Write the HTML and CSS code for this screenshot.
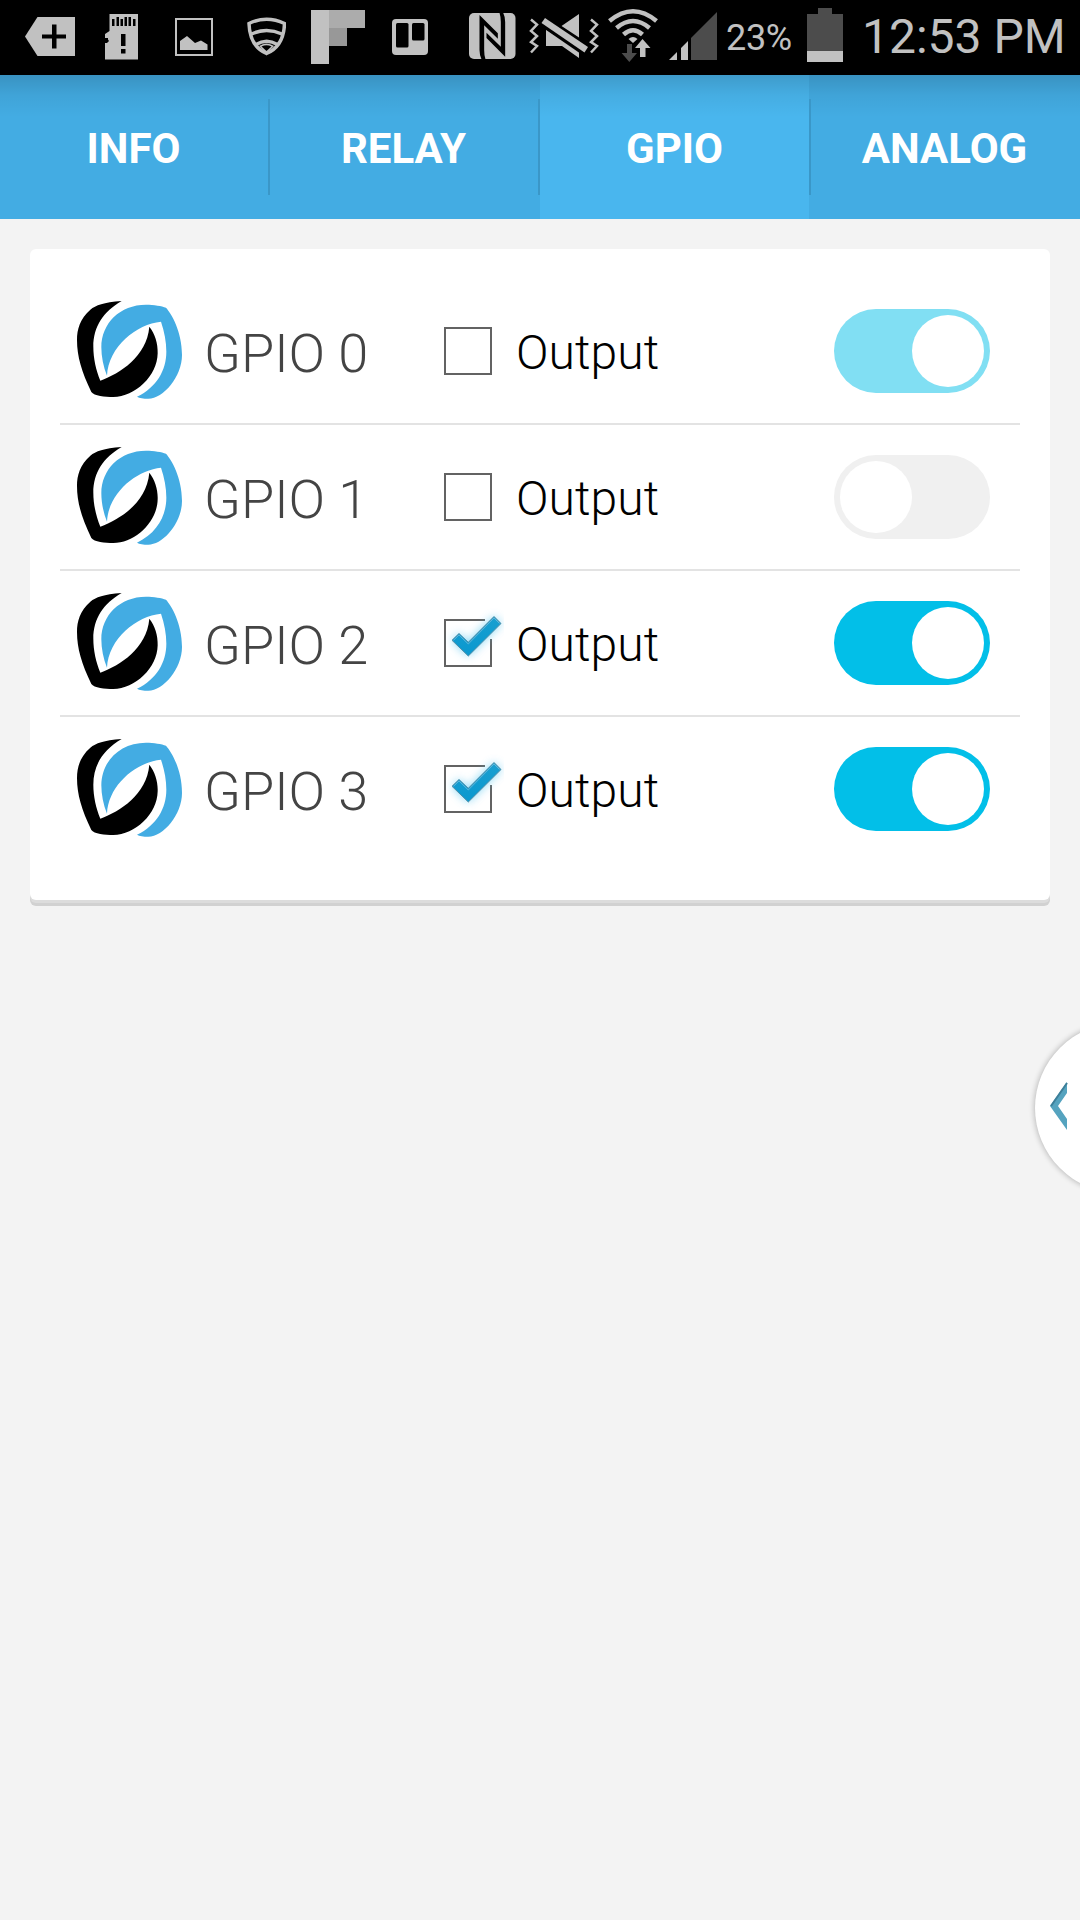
FILE: index.html
```html
<!DOCTYPE html>
<html lang="en">
<head>
<meta charset="utf-8">
<title>GPIO</title>
<link rel="stylesheet" href="styles.css">
</head>
<body>
<svg class="defs" aria-hidden="true">
  <symbol id="logo" viewBox="171 183 315 294">
    <path d="M305 183C250 187 228 196 211 209C180 236 171 268 171 300C171 350 185 395 214 456C222 468 255 471 280 471C345 471 412 408 413 340C414 310 405 282 388 260C380 350 300 400 241 422C228 390 220 355 220 320C220 260 250 215 305 183Z" fill="#000"/>
    <path d="M261 407C250 380 244 350 244 322C244 250 300 194 378 194C402 194 425 198 438 203C455 222 486 275 486 345C486 410 430 476 385 476C370 476 358 474 351 470C410 442 439 390 439 335C439 305 433 275 423 245C350 252 265 320 261 407Z" fill="#43ace3"/>
  </symbol>
  <symbol id="box" viewBox="0 0 72 72">
    <rect x="13" y="13" width="46" height="46" fill="none" stroke="#636363" stroke-width="2"/>
  </symbol>
  <symbol id="box-checked" viewBox="0 0 72 72">
    <path d="M53 13H13V59H59V32" fill="none" stroke="#636363" stroke-width="2"/>
    <path d="M20 33.300L27 26.500L36.300 35.300L62 9.500L69 16.500L36.300 49Z" fill="#5cc8f2" opacity=".75" filter="url(#glow)"/>
    <path d="M20 33.300L27 26.500L36.300 35.300L62 9.500L69 16.500L36.300 49Z" fill="url(#tick)" stroke="#4f8ea8" stroke-width="1"/>
    <path d="M21.500 33.300L27 28L36.300 37L62 11L67.500 16.500" fill="none" stroke="#5bb6dc" stroke-width="1"/>
  </symbol>
  <defs>
    <linearGradient id="tick" x1="0" y1="0" x2="0" y2="1"><stop offset="0" stop-color="#199fd0"/><stop offset="1" stop-color="#0a98cf"/></linearGradient>
    <filter id="glow" x="-40%" y="-40%" width="180%" height="180%"><feGaussianBlur stdDeviation="5"/></filter>
  </defs>
</svg>

<header class="status">
  <svg class="icon tag" viewBox="25 0 50 75"><path d="M25 36.500L37.500 17H75V56H37.500Z"/><path class="cut" d="M52 24.500h4.500v10H66v4H56.500v10H52v-10H42v-4h10z"/></svg>
  <svg class="icon sd" viewBox="105 0 33 75"><path d="M109.500 14H138V59.500H105V43h2l2-2-2-3h-2v-4l4.500-3z"/><path class="cut" d="M112 19h2.500v7H112zM116.500 17h2.500v9h-2.500zM120.500 19h2.500v7h-2.500zM124.500 17h2.500v9h-2.500zM128.500 17h2.500v9h-2.500zM133 19h2.500v7H133zM121 34h4.500v12H121zM121 49h4.500v4.500H121zM105 38h3v4h-3z"/></svg>
  <svg class="icon picture" viewBox="175 0 38 75"><rect class="line frame" x="176" y="19" width="36" height="36"/><path d="M180 41l7-5 8 7 6-2.500 6.500 4V50H180z"/></svg>
  <svg class="icon shield" viewBox="247 0 39 75"><path class="line" d="M249 23.500Q266.500 15 284.500 23.500C284 39 277 49 266.500 53.500C256 49 249.500 39 249 23.500Z"/><path class="line" d="M251.500 34Q266.500 27 282 34M256 44.500Q266.500 38 277.500 44.500"/><path d="M259 46q7.500-5 15 0l-7.500 8z"/><path class="cut" d="M261.500 46.500q5-2.500 10 0l-5 4.500z"/></svg>
  <svg class="icon flip" viewBox="311 0 54 75"><path d="M311 10h18v54h-18z"/><path fill="#acacac" d="M329 10h36v18h-36z"/><path fill="#989898" d="M329 28h18v18h-18z"/></svg>
  <svg class="icon board" viewBox="392 0 36 75"><rect x="392" y="19" width="36" height="36" rx="4"/><rect class="cut" x="396" y="23" width="12.500" height="24.500" rx="1.500"/><rect class="cut" x="412" y="23" width="12.500" height="17.500" rx="1.500"/></svg>
  <svg class="icon nfc" viewBox="468.500 0 47 75"><rect x="468.500" y="13" width="46.500" height="46" rx="5"/><path class="cut" transform="translate(300 0) scale(.33333)" d="M537 45L592 100V116L551 76V150Q551 168 555 178H543Q537 165 537 150ZM597 38H608Q614 50 614 66V170L558 114V98L601 140V66Q601 50 597 38Z"/></svg>
  <svg class="icon mute" viewBox="529 0 70 75"><path d="M561.500 26L579 14V37.500ZM546 29.500L579 51V58L562 46H546Z"/><path class="cut" d="M544.500 15l45 31-7 9-45-31z"/><path d="M545 18l43 29-3.500 5.500-43-29.500z"/><path class="line thin" d="M531 19.500l6 5-6 6.500 6 5-6 6 6 4-6 6.500M591 19.500l6 5-6 6.500 6 5-6 6 6 4-6 6.500"/></svg>
  <svg class="icon wifi" viewBox="608 0 50 75"><path class="arc" d="M609.500 21Q633 1.500 656.500 21M616.500 28Q633 14 649.500 28M623.500 34.500Q633 26 642.500 34.500"/><path d="M628.500 39q4.500-4 9 0l-4.500 4z"/><path fill="#4c4c4c" d="M627 44h5v9h5l-7.700 9-7.700-9h5.400z"/><path d="M642.500 39l8 9h-5v9h-5.500v-9h-5z"/></svg>
  <svg class="icon signal" viewBox="669 0 48 75"><path fill="#4c4c4c" d="M691 38L717 12V60H691Z"/><path d="M669 60l8-8v8zM681 48l7-7v19h-7z"/></svg>
  <span class="percent">23%</span>
  <svg class="icon battery" viewBox="807 0 36 75"><path fill="#4c4c4c" d="M807 14h11V8h14v6h11v37h-36z"/><path d="M807 51h36v11h-36z"/></svg>
  <span class="clock">12:53 PM</span>
</header>

<nav class="tabs">
  <a class="tab">INFO</a>
  <a class="tab">RELAY</a>
  <a class="tab active">GPIO</a>
  <a class="tab">ANALOG</a>
</nav>

<main class="card">
  <div class="row">
    <svg class="logo"><use href="#logo"/></svg>
    <span class="name">GPIO 0</span>
    <svg class="check"><use href="#box"/></svg>
    <span class="label">Output</span>
    <span class="switch on disabled"></span>
  </div>
  <div class="row">
    <svg class="logo"><use href="#logo"/></svg>
    <span class="name">GPIO 1</span>
    <svg class="check"><use href="#box"/></svg>
    <span class="label">Output</span>
    <span class="switch"></span>
  </div>
  <div class="row">
    <svg class="logo"><use href="#logo"/></svg>
    <span class="name">GPIO 2</span>
    <svg class="check"><use href="#box-checked"/></svg>
    <span class="label">Output</span>
    <span class="switch on"></span>
  </div>
  <div class="row">
    <svg class="logo"><use href="#logo"/></svg>
    <span class="name">GPIO 3</span>
    <svg class="check"><use href="#box-checked"/></svg>
    <span class="label">Output</span>
    <span class="switch on"></span>
  </div>
</main>

<svg class="handle" viewBox="1020 1008 60 200">
  <circle cx="1120" cy="1108" r="85" fill="#000" opacity=".3" filter="url(#shade)"/>
  <circle cx="1120" cy="1108" r="85" fill="#fff"/>
  <path d="M1067 1082V1093L1058 1106L1067 1119V1130L1050 1106Z" fill="#55a3bf"/>
  <path d="M1067 1083L1051 1106" stroke="#3d7f99" stroke-width="2"/>
  <defs><filter id="shade"><feGaussianBlur stdDeviation="3"/></filter></defs>
</svg>
</body>
</html>
```

FILE: styles.css
```css
* { box-sizing: border-box; }

body {
  position: relative;
  width: 1080px;
  height: 1920px;
  margin: 0;
  overflow: hidden;
  background: #f3f3f3;
  font-family: Roboto, "Liberation Sans", sans-serif;
}

.defs { position: absolute; width: 0; height: 0; }

/* status bar */
.status {
  display: flex;
  height: 75px;
  background: #000;
  color: #c1c1c1;
  line-height: 75px;
  white-space: nowrap;
}
.icon { flex: none; height: 75px; fill: #c1c1c1; }
.icon .cut { fill: #000; }
.icon .line { fill: none; stroke: #c1c1c1; stroke-width: 3.5; }
.icon .frame { stroke-width: 2; }
.icon .thin { stroke-width: 2.5; }
.icon .arc { fill: none; stroke: #c1c1c1; stroke-width: 4.5; }
.tag { width: 50px; margin-left: 25px; }
.sd { width: 33px; margin-left: 30px; }
.picture { width: 38px; margin-left: 37px; }
.shield { width: 39px; margin-left: 34px; }
.flip { width: 54px; margin-left: 25px; }
.board { width: 36px; margin-left: 27px; }
.nfc { width: 47px; margin-left: 40.5px; }
.mute { width: 70px; margin-left: 13.5px; }
.wifi { width: 50px; margin-left: 9px; }
.signal { width: 48px; margin-left: 11px; }
.percent { width: 65px; margin-left: 9px; font-size: 36px; letter-spacing: -.3px; line-height: 76px; }
.battery { width: 36px; margin-left: 16px; }
.clock { margin-left: 19px; font-size: 48px; line-height: 73px; }

/* tabs */
.tabs {
  display: grid;
  grid-template-columns: 270px 270px 269px 271px;
  height: 144px;
  background: linear-gradient(rgba(0, 0, 0, .15), rgba(0, 0, 0, .05) 20px, transparent 42px), #43ace3;
}
.tab {
  display: flex;
  align-items: center;
  justify-content: center;
  padding: 2px 3px 0 0;
  color: #fff;
  font-size: 42px;
  font-weight: 700;
  background: linear-gradient(#3a97c8, #3a97c8) right center / 2px 96px no-repeat;
}
.tab:last-child { padding-right: 0; background-position: left center; }
.tab.active {
  padding-right: 0;
  background: linear-gradient(rgba(0, 0, 0, .15), rgba(0, 0, 0, .05) 20px, transparent 42px), #49b6ee;
}

/* card */
.card {
  height: 651px;
  margin: 30px 30px 0;
  padding: 30px;
  border-radius: 6px;
  background: #fff;
  box-shadow: 0 3px #dcdcdc, 0 6px #d1d1d1;
}
.row {
  display: flex;
  align-items: center;
  height: 146px;
  padding: 0 30px 0 17px;
  border-bottom: 2px solid #e3e3e3;
}
.row:last-child { border-bottom-color: transparent; }
.logo { width: 105px; height: 98px; margin-top: -2px; }
.name { width: 225px; margin-left: 22px; padding-top: 4px; font-size: 54px; font-weight: 300; color: #444; }
.check { width: 72px; height: 72px; margin-left: 3px; }
.label { margin-left: 12px; padding-top: 2px; font-size: 48px; font-weight: 300; color: #000; letter-spacing: .1px; }
.switch {
  display: flex;
  width: 156px;
  height: 84px;
  margin-left: auto;
  padding: 6px;
  border-radius: 42px;
  background: #f0f0f0;
}
.switch::before { content: ""; width: 72px; border-radius: 50%; background: #fff; }
.on { justify-content: flex-end; background: #02bfe8; }
.disabled { background: #81dff3; }

/* edge handle over the page */
.handle {
  position: absolute;
  top: 1008px;
  right: 0;
  width: 60px;
  height: 200px;
}
```
